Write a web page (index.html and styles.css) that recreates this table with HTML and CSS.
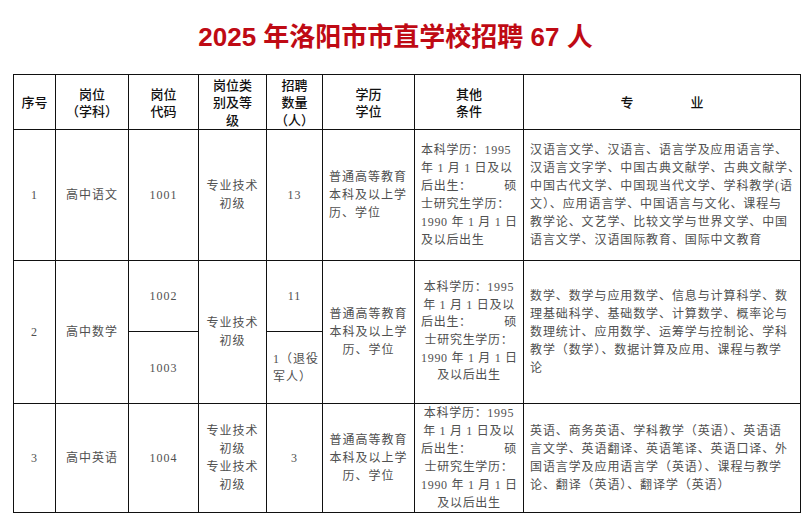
FILE: index.html
```html
<!DOCTYPE html>
<html lang="zh-CN">
<head>
<meta charset="utf-8">
<title>2025 年洛阳市市直学校招聘 67 人</title>
<link rel="stylesheet" href="styles.css">
</head>
<body>
<main class="page">
  <h1 class="title">2025 年洛阳市市直学校招聘 67 人</h1>
  <table class="jobs">
    <colgroup>
      <col class="c-no">
      <col class="c-post">
      <col class="c-code">
      <col class="c-level">
      <col class="c-num">
      <col class="c-edu">
      <col class="c-cond">
      <col class="c-major">
    </colgroup>
    <thead>
      <tr class="r-head">
        <th>序号</th>
        <th>岗位<br>（学科）</th>
        <th>岗位<br>代码</th>
        <th class="tall">岗位类<br>别及等<br>级</th>
        <th class="tall">招聘<br>数量<br>（人）</th>
        <th>学历<br>学位</th>
        <th>其他<br>条件</th>
        <th class="major-h">专<span class="gap"></span>业</th>
      </tr>
    </thead>
    <tbody>
      <tr class="r-1">
        <td class="ctr">1</td>
        <td class="ctr">高中语文</td>
        <td class="ctr">1001</td>
        <td class="ctr lv">专业技术<br>初级</td>
        <td class="ctr">13</td>
        <td class="edu">普通高等教育<br>本科及以上学<br>历、学位</td>
        <td class="cond">本科学历：1995<br>年 1 月 1 日及以<div class="spread"><span>后出生：</span><span>硕</span></div>士研究生学历：<br>1990 年 1 月 1 日<br>及以后出生</td>
        <td class="major m1">汉语言文学、汉语言、语言学及应用语言学、<br>汉语言文字学、中国古典文献学、古典文献学、<br>中国古代文学、中国现当代文学、学科教学(语<br>文）、应用语言学、中国语言与文化、课程与<br>教学论、文艺学、比较文学与世界文学、中国<br>语言文学、汉语国际教育、国际中文教育</td>
      </tr>
      <tr class="r-2a">
        <td class="ctr" rowspan="2">2</td>
        <td class="ctr" rowspan="2">高中数学</td>
        <td class="ctr">1002</td>
        <td class="ctr lv" rowspan="2">专业技术<br>初级</td>
        <td class="ctr">11</td>
        <td class="edu ctr" rowspan="2">普通高等教育<br>本科及以上学<br>历、学位</td>
        <td class="cond ctr c2" rowspan="2">本科学历：1995<br>年 1 月 1 日及以<div class="spread"><span>后出生：</span><span>硕</span></div>士研究生学历：<br>1990 年 1 月 1 日<br>及以后出生</td>
        <td class="major m2" rowspan="2">数学、数学与应用数学、信息与计算科学、数<br>理基础科学、基础数学、计算数学、概率论与<br>数理统计、应用数学、运筹学与控制论、学科<br>教学（数学）、数据计算及应用、课程与教学<br>论</td>
      </tr>
      <tr class="r-2b">
        <td class="ctr">1003</td>
        <td class="vet">1（退役<br>军人）</td>
      </tr>
      <tr class="r-3">
        <td class="ctr">3</td>
        <td class="ctr">高中英语</td>
        <td class="ctr">1004</td>
        <td class="ctr lv">专业技术<br>初级<br>专业技术<br>初级</td>
        <td class="ctr">3</td>
        <td class="edu ctr">普通高等教育<br>本科及以上学<br>历、学位</td>
        <td class="cond ctr c3">本科学历：1995<br>年 1 月 1 日及以<div class="spread"><span>后出生：</span><span>硕</span></div>士研究生学历：<br>1990 年 1 月 1 日<br>及以后出生</td>
        <td class="major m3">英语、商务英语、学科教学（英语）、英语语<br>言文学、英语翻译、英语笔译、英语口译、外<br>国语言学及应用语言学（英语）、课程与教学<br>论、翻译（英语）、翻译学（英语）</td>
      </tr>
    </tbody>
  </table>
</main>
</body>
</html>
```

FILE: styles.css
```css
html, body {
  margin: 0;
  background: #ffffff;
}

.page {
  padding-left: 13px;
  width: 787px;
}

.title {
  margin: 0;
  height: 74px;
  line-height: 74px;
  padding-right: 22px;
  text-align: center;
  font-family: "Liberation Sans", "Noto Sans CJK SC", sans-serif;
  font-size: 26px;
  font-weight: 700;
  color: #bf0a14;
}

.jobs {
  width: 787px;
  border-collapse: collapse;
  table-layout: fixed;
  font-family: "Liberation Serif", "Noto Sans CJK SC", serif;
  font-size: 12px;
  letter-spacing: 1px;
  color: #505050;
}

.c-no { width: 42px; }
.c-post { width: 73px; }
.c-code { width: 70px; }
.c-level { width: 68px; }
.c-num { width: 56px; }
.c-edu { width: 92px; }
.c-cond { width: 109px; }
.c-major { width: 277px; }

.jobs th,
.jobs td {
  border: 1px solid #111111;
  vertical-align: middle;
  padding: 0 6px;
  line-height: 18px;
}

.jobs th {
  font-family: "Noto Sans CJK SC", sans-serif;
  font-size: 13px;
  font-weight: 500;
  letter-spacing: 0;
  color: #111111;
  text-align: center;
  line-height: 17.5px;
}

.jobs th.tall {
  line-height: 17.5px;
}

.major-h .gap {
  display: inline-block;
  width: 57px;
}

.r-head { height: 55px; }
.r-1 { height: 131px; }
.r-2a { height: 71px; }
.r-2b { height: 72px; }
.r-3 { height: 108px; }

.ctr {
  text-align: center;
}

.edu {
  line-height: 17.5px;
  white-space: nowrap;
}

.cond {
  padding: 0 7px;
  line-height: 18.3px;
  white-space: nowrap;
  letter-spacing: 0.7px;
}

.cond.c2 { line-height: 17.6px; }
.cond.c3 { line-height: 18px; }

.spread {
  display: flex;
  justify-content: space-between;
}

.vet {
  text-align: left;
  padding: 0 4px;
  white-space: nowrap;
}

.major {
  padding: 0 7px;
  white-space: nowrap;
  letter-spacing: 0.9px;
}

.m1 { line-height: 18.3px; }
.m2 { line-height: 21.5px; }
.m3 { line-height: 19.7px; }
```
